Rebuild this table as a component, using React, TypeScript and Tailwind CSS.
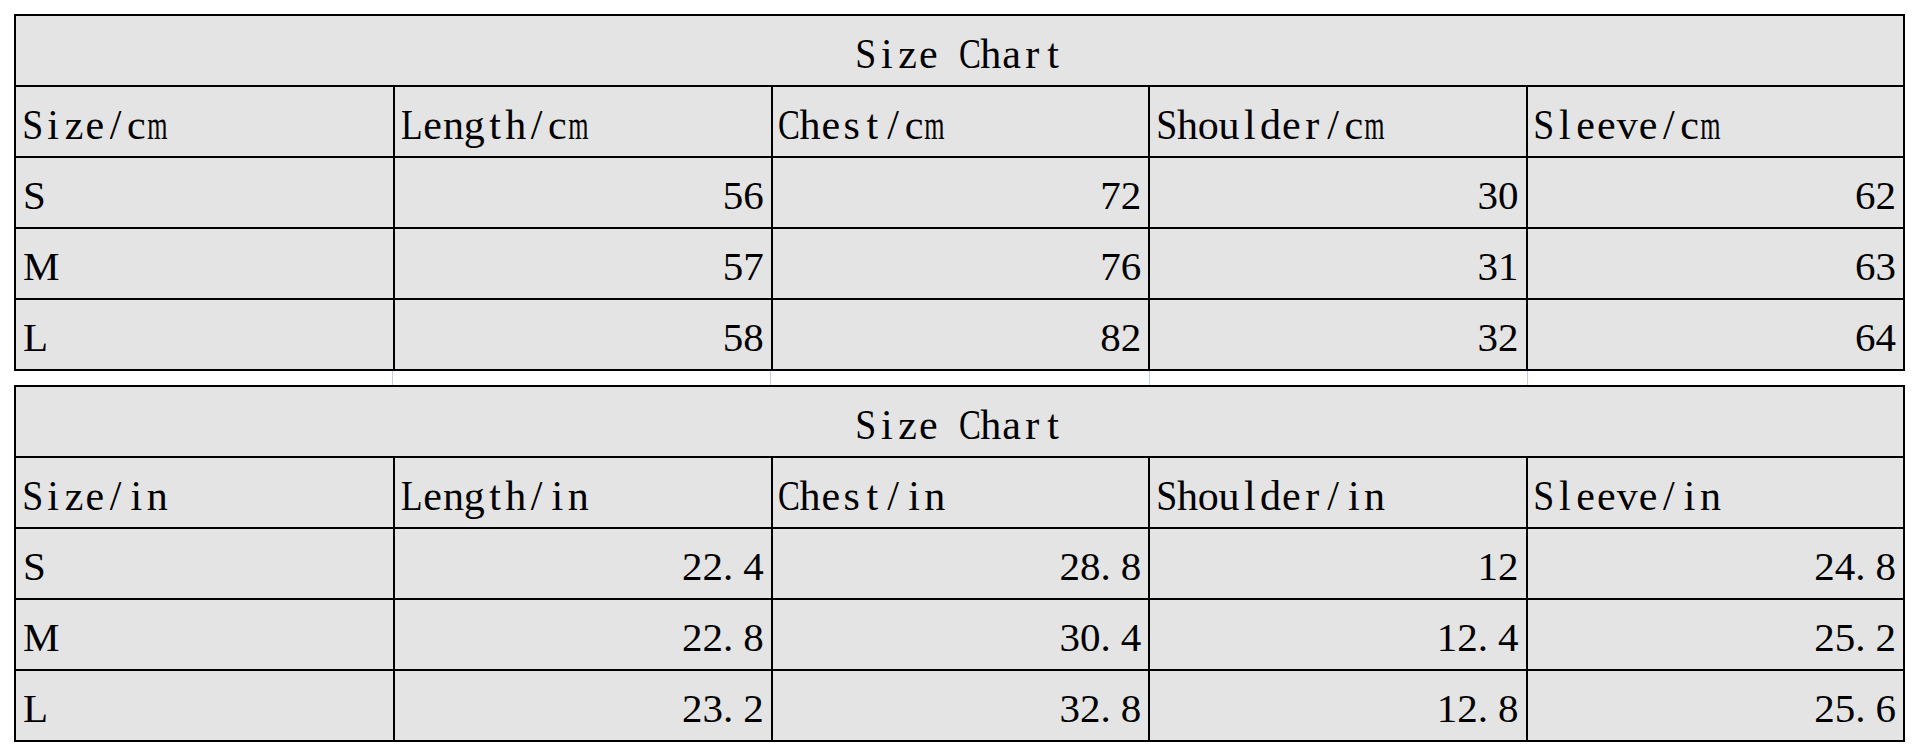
import React from 'react';

type Unit = 'cm' | 'in';

const columns = ['Size', 'Length', 'Chest', 'Shoulder', 'Sleeve'];

const charts: { unit: Unit; rows: [string, string, string, string, string][] }[] = [
  {
    unit: 'cm',
    rows: [
      ['S', '56', '72', '30', '62'],
      ['M', '57', '76', '31', '63'],
      ['L', '58', '82', '32', '64']
    ]
  },
  {
    unit: 'in',
    rows: [
      ['S', '22.4', '28.8', '12', '24.8'],
      ['M', '22.8', '30.4', '12.4', '25.2'],
      ['L', '23.2', '32.8', '12.8', '25.6']
    ]
  }
];

// wide serif glyphs get squeezed into the half-width cell
const squeeze: Record<string, string> = {
  m: 'scale-x-[0.62]',
  C: 'scale-x-[0.78]',
  L: 'scale-x-[0.84]',
  S: 'scale-x-[0.9]'
};

// SimSun-like label: serif glyphs on a fixed half-width pitch
function Label({ text }: { text: string }) {
  return (
    <span className="flex font-['Liberation_Serif',serif] text-[42px] leading-none">
      {text.split('').map((ch, i) => (
        <span key={i} className="inline-flex w-[20.8px] justify-center whitespace-pre">
          <span className={`inline-block ${squeeze[ch] || ''}`}>{ch}</span>
        </span>
      ))}
    </span>
  );
}

function Num({ value }: { value: string }) {
  const [whole, frac] = value.split('.');
  return (
    <span className="font-['Liberation_Serif',serif] text-[41px] leading-none">
      {whole}
      {frac !== undefined && (
        <>
          <span className="mr-[10px]">.</span>
          {frac}
        </>
      )}
    </span>
  );
}

function SizeTable({ unit, rows }: { unit: Unit; rows: [string, string, string, string, string][] }) {
  return (
    <div className="w-[1891px] border-2 border-black bg-[#e4e4e4] text-black">
      <div className="flex h-[69px] items-end justify-center pb-[10px]">
        <Label text="Size Chart" />
      </div>
      <div className="grid h-[71px] grid-cols-5 border-t-2 border-black">
        {columns.map((c, i) => (
          <div key={c} className={`flex items-end pb-[10px] pl-[6px] ${i > 0 ? 'border-l-2 border-black' : ''}`}>
            <Label text={`${c}/${unit}`} />
          </div>
        ))}
      </div>
      {rows.map((r) => (
        <div key={r[0]} className="grid h-[71px] grid-cols-5 border-t-2 border-black">
          <div className="flex items-end pb-[11px] pl-[7px]">
            <span className="font-['Liberation_Serif',serif] text-[41px] leading-none">{r[0]}</span>
          </div>
          {r.slice(1).map((v, i) => (
            <div key={i} className="flex items-end justify-end border-l-2 border-black pb-[11px] pr-[7px]">
              <Num value={v} />
            </div>
          ))}
        </div>
      ))}
    </div>
  );
}

export default function App() {
  return (
    <div className="h-[755px] w-[1920px] bg-white pl-[14px] pt-[14px]">
      <SizeTable unit={charts[0].unit} rows={charts[0].rows} />
      {/* spreadsheet gridlines showing through the gap */}
      <div className="grid h-[14px] w-[1891px] grid-cols-5">
        {columns.map((c, i) => (
          <div key={c} className={i > 0 ? 'border-l border-[#c3cde3]' : ''} />
        ))}
      </div>
      <SizeTable unit={charts[1].unit} rows={charts[1].rows} />
    </div>
  );
}
